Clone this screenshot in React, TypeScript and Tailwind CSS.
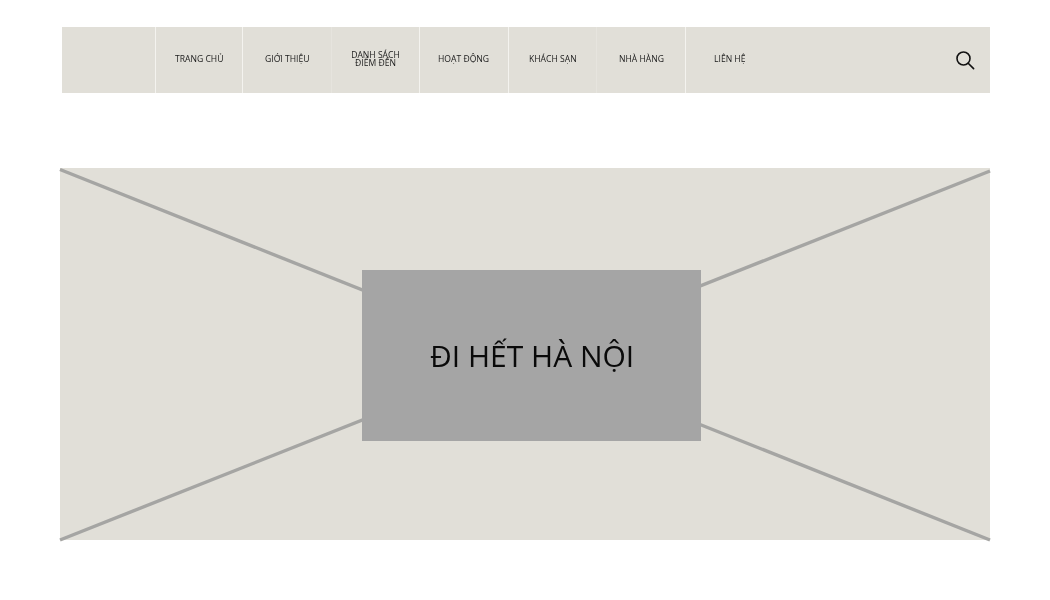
const navItems = [
  { label: "TRANG CHỦ", width: "w-[87px]", border: "border-[#f4f3ef]" },
  { label: "GIỚI THIỆU", width: "w-[89px]", border: "border-[#f4f3ef]" },
  { label: "DANH SÁCH ĐIỂM ĐẾN", width: "w-[88px]", border: "border-[#e6e4de]" },
  { label: "HOẠT ĐỘNG", width: "w-[89px]", border: "border-[#f4f3ef]" },
  { label: "KHÁCH SẠN", width: "w-[88px]", border: "border-[#f4f3ef]" },
  { label: "NHÀ HÀNG", width: "w-[89px]", border: "border-[#e6e4de]" },
  { label: "LIÊN HỆ", width: "w-[89px]", border: "border-[#f4f3ef]" },
];

const App = () => {
  return (
    <div className="w-[1050px] h-[600px] bg-white overflow-hidden pt-[27px] font-['Open_Sans',sans-serif]">
      <div className="ml-[62px] w-[928px] h-[66px] bg-[#e1dfd8] flex items-stretch">
        <div className="w-[93px]" />
        {navItems.map((item) => (
          <div
            key={item.label}
            className={`${item.width} border-l ${item.border} flex items-center justify-center pb-[3px] px-[16px] text-center text-[8.6px] leading-[8px] text-[#1a1a1a]`}
          >
            <span className="will-change-transform">{item.label}</span>
          </div>
        ))}
        <div className="flex-1 flex items-center justify-end pr-[14px] pb-[1px]">
          <svg width="22" height="22" viewBox="0 0 22 22" fill="none" stroke="#111" strokeWidth="1.6" strokeLinecap="round">
            <circle cx="9.5" cy="9.5" r="6.5" />
            <path d="M14.2 14.2 L19.6 19.6" />
          </svg>
        </div>
      </div>

      <div className="relative ml-[60px] mt-[75px] w-[930px] h-[372px] bg-[#e1dfd8] flex items-start">
        <svg className="absolute inset-0 overflow-visible" width="930" height="372" viewBox="0 0 930 372" fill="none" stroke="#a5a5a3" strokeWidth="3.4">
          <path d="M0 1.5 L930 372" />
          <path d="M0 372 L930 3" />
        </svg>
        <div className="relative ml-[302px] mt-[102px] w-[339px] h-[171px] bg-[#a5a5a5] flex items-center justify-center">
          <span className="text-[30px] leading-none text-[#0a0a0a] pt-[1px] pl-[1px] will-change-transform">ĐI HẾT HÀ NỘI</span>
        </div>
      </div>
    </div>
  );
};

export default App;
